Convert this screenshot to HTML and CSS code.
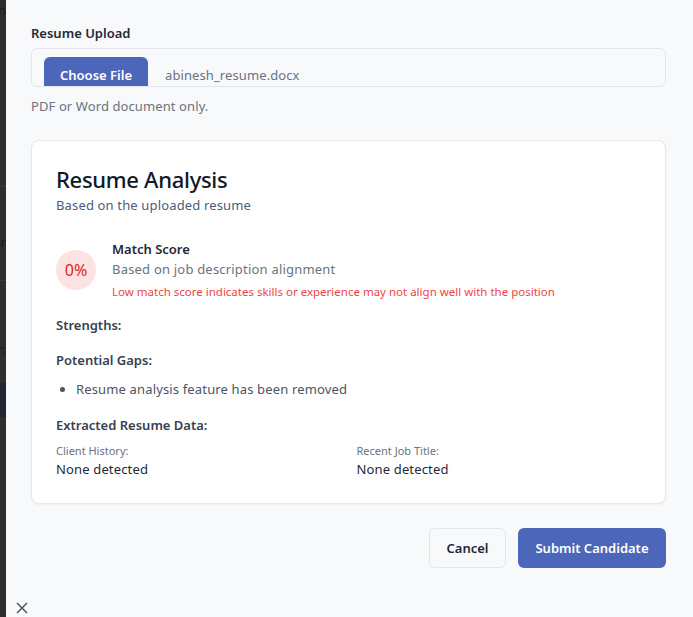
FILE: index.html
```html
<!DOCTYPE html>
<html>
<head>
<meta charset="utf-8">
<link rel="stylesheet" href="styles.css">
</head>
<body>
<div class="screen">
  <div class="backdrop">
    <div class="bd-frag bd-top">n</div>
    <div class="bd-line l1"></div>
    <div class="bd-frag bd-mid">er</div>
    <div class="bd-line l2"></div>
    <div class="bd-frag bd-r">r:</div>
    <div class="bd-block"></div>
  </div>
  <div class="modal">
    <div class="field">
      <label class="label">Resume Upload</label>
      <div class="file-box">
        <span class="file-btn">Choose File</span>
        <span class="file-name">abinesh_resume.docx</span>
      </div>
      <p class="hint">PDF or Word document only.</p>
    </div>

    <section class="card">
      <h2 class="card-title">Resume Analysis</h2>
      <p class="card-sub">Based on the uploaded resume</p>

      <div class="score-row">
        <div class="score-circle">0%</div>
        <div class="score-text">
          <div class="score-title">Match Score</div>
          <div class="score-desc">Based on job description alignment</div>
          <div class="score-warn">Low match score indicates skills or experience may not align well with the position</div>
        </div>
      </div>

      <h3 class="sec-title first">Strengths:</h3>
      <h3 class="sec-title">Potential Gaps:</h3>
      <ul class="gaps">
        <li>Resume analysis feature has been removed</li>
      </ul>
      <h3 class="sec-title">Extracted Resume Data:</h3>
      <div class="data-grid">
        <div class="data-item">
          <div class="data-label">Client History:</div>
          <div class="data-value">None detected</div>
        </div>
        <div class="data-item">
          <div class="data-label">Recent Job Title:</div>
          <div class="data-value">None detected</div>
        </div>
      </div>
    </section>

    <div class="actions">
      <button class="btn btn-outline">Cancel</button>
      <button class="btn btn-primary">Submit Candidate</button>
    </div>

    <button class="close" aria-label="Close">
      <svg width="12" height="12" viewBox="0 0 12 12"><path d="M1 1L11 11M11 1L1 11" stroke="#4b5563" stroke-width="1.5" fill="none"/></svg>
    </button>
  </div>
</div>
</body>
</html>
```

FILE: styles.css
```css
* { box-sizing: border-box; }
html, body { margin: 0; padding: 0; }
body {
  font-family: "Noto Sans", "Open Sans", sans-serif;
  font-size: 13px;
  color: #1f2937;
  background: #f8f9fb;
}
.screen {
  display: flex;
  width: 693px;
  height: 617px;
  overflow: hidden;
}
.backdrop {
  width: 6px;
  flex: none;
  background: #2e2e2e;
  position: relative;
  overflow: hidden;
}
.bd-frag {
  position: absolute;
  right: 0;
  font-size: 13px;
  color: #1a1a1a;
  line-height: 16px;
}
.bd-top { top: 2px; }
.bd-mid { top: 234px; }
.bd-r { top: 341px; }
.bd-line { position: absolute; left: 0; right: 0; height: 1px; background: #3b3b3b; }
.l1 { top: 186px; }
.l2 { top: 280px; }
.bd-block { position: absolute; left: 0; right: 0; top: 383px; height: 34px; background: #232632; }

.modal {
  flex: 1;
  position: relative;
  background: #f8f9fb;
  padding: 24px 27px 0 25px;
}
.label {
  display: block;
  font-weight: 600;
  font-size: 13px;
  line-height: 18px;
  color: #1f2937;
}
.file-box {
  margin-top: 6px;
  height: 39px;
  border: 1px solid #e2e6ef;
  border-radius: 6px;
  display: flex;
  align-items: flex-start;
  overflow: hidden;
  padding: 8px 0 0 12px;
}
.file-btn {
  flex: none;
  width: 104px;
  height: 36px;
  background: #4c66b9;
  color: #fff;
  font-weight: 600;
  font-size: 13px;
  border-radius: 6px;
  display: flex;
  align-items: center;
  justify-content: center;
}
.file-name {
  margin-left: 17px;
  line-height: 36px;
  color: #6b7280;
  font-size: 13px;
  letter-spacing: 0.1px;
}
.hint {
  margin: 10px 0 0;
  line-height: 18px;
  color: #6b7280;
  font-size: 13px;
  letter-spacing: 0.1px;
}
.card {
  margin-top: 25px;
  background: #fff;
  border: 1px solid #e5e7eb;
  border-radius: 8px;
  box-shadow: 0 1px 2px rgba(0,0,0,0.05);
  padding: 24px 24px 25px;
}
.card-title {
  margin: 0;
  font-size: 22px;
  line-height: 28px;
  font-weight: 500;
  color: #111827;
  letter-spacing: -0.3px;
}
.card-sub {
  margin: 3px 0 0;
  line-height: 18px;
  font-size: 13px;
  color: #4b5d7d;
  letter-spacing: 0.15px;
}
.score-row {
  margin-top: 26px;
  display: flex;
  align-items: center;
  gap: 16px;
}
.score-circle {
  flex: none;
  width: 40px;
  height: 40px;
  border-radius: 50%;
  background: #fde2e2;
  color: #dc2626;
  font-size: 16px;
  display: flex;
  align-items: center;
  justify-content: center;
}
.score-title {
  font-weight: 600;
  line-height: 18px;
  color: #1f2937;
}
.score-desc {
  margin-top: 2px;
  line-height: 18px;
  color: #6b7280;
  letter-spacing: 0.2px;
}
.score-warn {
  margin-top: 6px;
  font-size: 11.5px;
  line-height: 16px;
  color: #ef4444;
}
.sec-title {
  margin: 17px 0 0;
  font-size: 13px;
  line-height: 18px;
  font-weight: 600;
  color: #374151;
}
.sec-title.first { margin-top: 16px; }
.gaps {
  margin: 11px 0 0;
  padding-left: 20px;
  color: #4b5563;
  line-height: 18px;
  letter-spacing: 0.15px;
}
.gaps + .sec-title { margin-top: 18px; }
.data-grid {
  margin-top: 9px;
  display: grid;
  grid-template-columns: 1fr 1fr;
  gap: 16px;
}
.data-label {
  font-size: 11px;
  line-height: 16px;
  color: #6b7280;
}
.data-value {
  margin-top: 1px;
  line-height: 18px;
  color: #1f2937;
  letter-spacing: 0.15px;
}
.actions {
  margin-top: 24px;
  display: flex;
  justify-content: flex-end;
  gap: 12px;
}
.btn {
  height: 40px;
  border-radius: 6px;
  font-family: inherit;
  font-size: 13px;
  font-weight: 600;
  padding: 0 12px;
  cursor: pointer;
}
.btn-outline {
  width: 77px;
  background: #f8f9fb;
  border: 1px solid #e2e6ef;
  color: #1f2937;
}
.btn-primary {
  width: 148px;
  background: #4c66b9;
  border: none;
  color: #fff;
}
.close {
  position: absolute;
  left: 10px;
  top: 602px;
  width: 12px;
  height: 12px;
  padding: 0;
  border: none;
  background: none;
  display: flex;
}
```
